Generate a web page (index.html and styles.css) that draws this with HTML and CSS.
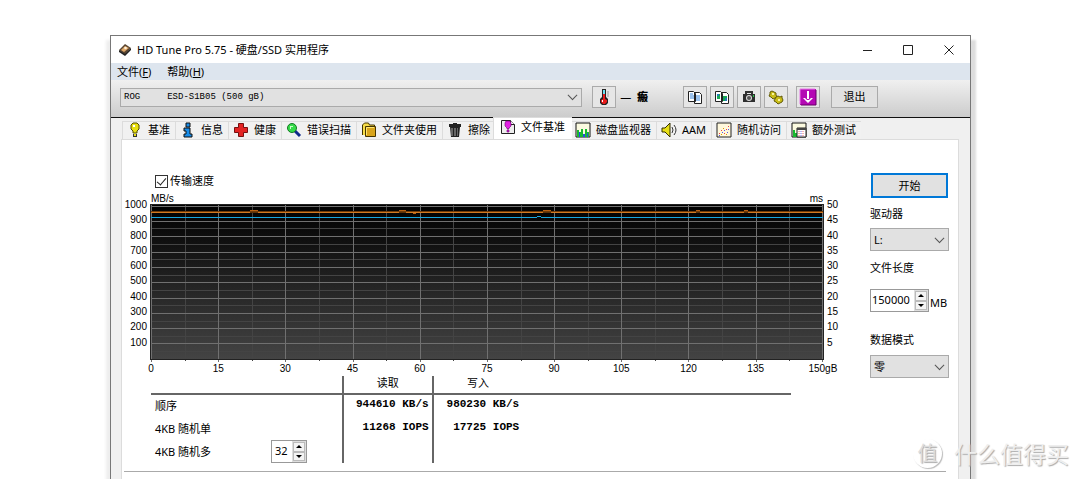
FILE: index.html
```html
<!DOCTYPE html>
<html lang="zh-CN">
<head>
<meta charset="utf-8">
<title>HD Tune Pro 5.75</title>
<link rel="stylesheet" href="styles.css">
</head>
<body>
<div class="window">
  <header class="titlebar">
    <svg class="app-icon" viewBox="0 0 14 14"><path d="M1 7 7 1l6 4-6 7z" fill="#5a4632"/><path d="M1 7v2l6 4v-2zM7 11v2l6-6V5z" fill="#222"/><path d="M3 7 7 3l4 2-5 4z" fill="#e0a868"/><circle cx="7.500" cy="5" r="1.300" fill="#fff3dc"/></svg>
    <h1>HD Tune Pro 5.75 - 硬盘/SSD 实用程序</h1>
    <div class="caption-buttons">
      <button aria-label="最小化"><svg viewBox="0 0 12 12"><path d="M2 6.500h9"/></svg></button>
      <button aria-label="最大化"><svg viewBox="0 0 12 12"><path d="M1.500 1.500h9v9h-9z"/></svg></button>
      <button aria-label="关闭"><svg viewBox="0 0 12 12"><path d="m1.500 1.500 9 9m0-9-9 9"/></svg></button>
    </div>
  </header>
  <nav class="menu"><button>文件(<u>F</u>)</button><button>帮助(<u>H</u>)</button></nav>
  <div class="toolbar">
    <div class="select disk"><select aria-label="硬盘"><option>ROG&nbsp;&nbsp;&nbsp;&nbsp;&nbsp;ESD-S1B05 (500 gB)</option></select></div>
    <button class="tool" aria-label="温度"><svg viewBox="0 0 16 16"><path d="M6 0h4v8l2 2v4l-2 2H6l-2-2v-4l2-2z" fill="#222"/><path d="M7 1h2v4H7z" fill="#6de0ef"/><path d="M7 5h2v5l2 1v2l-2 2H7l-2-2v-2l2-1z" fill="#e81c1c"/><path d="M6 11h1v2H6z" fill="#fff"/><path d="M11 3h2M11 5h2M11 7h2" stroke="#999"/></svg></button>
    <span class="temperature">— <b>瘢</b></span>
    <div class="tool-group">
      <button class="tool" aria-label="复制文本"><svg viewBox="0 0 16 16"><path d="M1.500 2.500h5l2 2v8h-7zM7.500 3.500h5l2 2v9h-7z" fill="#fff" stroke="#222"/><path d="M3 5h3M3 7h4M3 9h4M9 7h4M9 9h4M9 11h4" stroke="#3684d8"/></svg></button>
      <button class="tool" aria-label="复制图像"><svg viewBox="0 0 16 16"><path d="M1.500 2.500h5l2 2v8h-7zM7.500 3.500h5l2 2v9h-7z" fill="#fff" stroke="#222"/><path d="M3 5h3v5H3zM9 7h4v5H9z" fill="#18a858"/><path d="M3 5h2v2H3zM11 9h2v3h-2z" fill="#2878b8"/></svg></button>
      <button class="tool" aria-label="截图"><svg viewBox="0 0 16 16"><path d="M5 5V3h6v2" fill="none" stroke="#333" stroke-width="2"/><path d="M2 5h12v8H2z" fill="#2d2d2d"/><circle cx="8" cy="9" r="3" fill="#ddd"/><circle cx="8" cy="9" r="2" fill="#555"/><path d="M12 6h1v2h-1z" fill="#22cc44"/></svg></button>
      <button class="tool" aria-label="选项"><svg viewBox="0 0 16 16"><g fill="#c9bd18" stroke="#625b08"><path d="m2 3 2-1 2 1 2 1v2l1 2-2 1-2 1-2-2-2-1 1-2z"/><path d="m8 8 2-1 2 1 2-1v2l1 2-1 2-2 1-2 1-2-2-2-1 1-2z"/></g><path d="M4 4h2v2H4zM10 10h2v2h-2z" fill="#f8f3a0"/></svg></button>
    </div>
    <button class="tool save" aria-label="保存"><svg viewBox="0 0 18 18"><path d="M1 1h16v16H1z" fill="#b408b4"/><path d="M1 16V1h15" fill="none" stroke="#e878e8"/><path d="M17 2v15H2" fill="none" stroke="#650065"/><path d="M9 3v8" fill="none" stroke="#fff" stroke-width="2"/><path d="M4 10h2l2 2h2l2-2h2l-5 5z" fill="#fff"/></svg></button>
    <button class="button exit">退出</button>
  </div>
  <main class="body">
    <div class="tabs" role="tablist">
      <button role="tab"><svg viewBox="0 0 16 16"><path d="M6 1h4l2 2v4l-2 2v2H6V9L4 7V3z" fill="#e8df12" stroke="#554e00"/><path d="M6 3h2v2H6z" fill="#fff"/><path d="M6 12h4v3H6z" fill="#333"/><path d="M7 12h2v2H7z" fill="#e8df12"/></svg>基准</button>
      <button role="tab"><svg viewBox="0 0 16 16"><path d="M6 1h4v4H6zM4 6h6v6h2v3H4v-3h2V9H4z" fill="#188ce8" stroke="#111"/></svg>信息</button>
      <button role="tab"><svg viewBox="0 0 16 16"><path d="M5.500 1.500h5v4h4v5h-4v4h-5v-4h-4v-5h4z" fill="#e32424" stroke="#761010"/></svg>健康</button>
      <button role="tab"><svg viewBox="0 0 16 16"><path d="m9 9 5 5" stroke="#102a8c" stroke-width="3"/><circle cx="6" cy="6" r="4.500" fill="#36dc4a" stroke="#147823"/><path d="M4 4h3v1H5v2H4z" fill="#c8ffc8"/></svg>错误扫描</button>
      <button role="tab"><svg viewBox="0 0 16 16"><path d="M1.500 13V3l2-2h4l1 2h5v10" fill="#f6dd48" stroke="#443400"/><path d="M4.500 4.500h10v10h-10z" fill="#d9a51c" stroke="#443400"/><path d="M5.500 13V5.500H13" fill="none" stroke="#ffe670"/></svg>文件夹使用</button>
      <button role="tab"><svg viewBox="0 0 16 16"><path d="M2 2h12v3H2zM6 1h4v2H6zM3 5h10l-1 10H4z" fill="#222"/><path d="M5 6v8M8 6v8" stroke="#aaa"/><path d="M10.500 6v8" stroke="#666"/></svg>擦除</button>
      <button role="tab" class="selected" aria-selected="true"><svg viewBox="0 0 16 16"><path d="M1.500 1.500h9l4 4v9h-13z" fill="#eee" stroke="#222"/><path d="M10.500 1.500v4h4" fill="#fff" stroke="#222"/><path d="M6 2h4l1 2v3L9 9v1H7V9L5 7V4zM7 11h2v2H7z" fill="#e322e3" stroke="#68006c" stroke-width=".600"/></svg>文件基准</button>
      <button role="tab"><svg viewBox="0 0 16 16"><path d="M1 1h14v14H1z" fill="#fbfae0" stroke="#111"/><path d="M2 15V8h2v2h2v-3h2v5h2V7h2v3h2v5z" fill="#18bb30"/><path d="M4 15v-5h1v5zm4 0v-3h2v3zm4 0v-4h1v4z" fill="#264ee0"/></svg>磁盘监视器</button>
      <button role="tab"><svg viewBox="0 0 16 16"><path d="M1 6h3l5-5v14l-5-5H1z" fill="#e8df18" stroke="#332f00"/><path d="M11 5q2 3 0 6M13 3q4 5 0 10" fill="none" stroke="#333"/></svg>AAM</button>
      <button role="tab"><svg viewBox="0 0 16 16"><path d="M1 1h14v14H1z" fill="#fff8dc" stroke="#222"/><path d="M3 11h1v1H3zM5 8h1v1H5zM8 11h1v1H8zM10 7h1v1h-1zM12 4h1v1h-1z" fill="#e44"/><path d="M3 13h1v1H3zM6 10h1v1H6zM8 8h1v1H8zM11 10h1v1h-1zM12 7h1v1h-1z" fill="#55e"/><path d="M5 12h1v1H5zM7 6h1v1H7zM10 12h1v1h-1z" fill="#d90"/></svg>随机访问</button>
      <button role="tab"><svg viewBox="0 0 16 16"><path d="M1 1h14v14H1z" fill="#fbfae0" stroke="#111"/><path d="M2 15V8h2v3h2v4z" fill="#18bb30"/><path d="M6 6h9v9H6z" fill="#fff" stroke="#222"/><path d="M6 6h9v2H6z" fill="#444"/><path d="M8 9v5M12 9v5" stroke="#e66" stroke-dasharray="1 1"/><path d="M10 9v5" stroke="#66e" stroke-dasharray="1 1"/></svg>额外测试</button>
    </div>
    <section class="panel">
      <div class="content">
        <div class="results">
          <label class="check"><input type="checkbox" checked>传输速度</label>
          <div class="chart">
            <div class="axis left"><span>1000</span><span>900</span><span>800</span><span>700</span><span>600</span><span>500</span><span>400</span><span>300</span><span>200</span><span>100</span></div>
            <div class="units"><span>MB/s</span><span>ms</span></div>
            <div class="axis right"><span>50</span><span>45</span><span>40</span><span>35</span><span>30</span><span>25</span><span>20</span><span>15</span><span>10</span><span>5</span></div>
            <svg class="plot" viewBox="0 0 674 158" preserveAspectRatio="none" shape-rendering="crispEdges">
              <defs><linearGradient id="shade" x2="0" y2="1"><stop stop-color="#000"/><stop offset="1" stop-color="#444"/></linearGradient></defs>
              <path d="M0 0h674v156H0z" fill="url(#shade)"/>
              <path d="M35.500 0v157M102.500 0v157M169.500 0v157M236.500 0v157M303.500 0v157M371.500 0v157M438.500 0v157M505.500 0v157M572.500 0v157M639.500 0v157M0 24.500h674M0 40.500h674M0 55.500h674M0 71.500h674M0 86.500h674M0 101.500h674M0 117.500h674M0 132.500h674M0 147.500h674" stroke="#444"/>
              <path d="M1.500 0v158M68.500 0v158M135.500 0v158M203.500 0v158M270.500 0v158M337.500 0v158M404.500 0v158M471.500 0v158M538.500 0v158M606.500 0v158M672.500 0v158M0 2.500h674M0 17.500h674M0 32.500h674M0 48.500h674M0 63.500h674M0 78.500h674M0 94.500h674M0 109.500h674M0 124.500h674M0 139.500h674" stroke="#707070"/>
              <path d="M0 .500h674M0 155.500h674M.500 0v156M673.500 0v156" stroke="#222"/>
              <path d="M1 7.500h672" stroke="#713b08"/>
              <path d="M1 8.500h99M108 8.500h141M256 8.500h137M401 8.500h145M550 8.500h44M598 8.500h75" stroke="#d27a22"/>
              <path d="M100 8.500h8M249 8.500h7M393 8.500h8M546 8.500h4M594 8.500h4" stroke="#5a3008"/>
              <path d="M100 6.500h8M249 6.500h7M263 9.500h3M393 6.500h8M546 6.500h4M594 6.500h4" stroke="#b86112"/>
              <path d="M1 13.500h386M391 13.500h282M387 12.500h4" stroke="#18a8e0"/>
            </svg>
            <div class="axis bottom"><span>0</span><span>15</span><span>30</span><span>45</span><span>60</span><span>75</span><span>90</span><span>105</span><span>120</span><span>135</span><span>150gB</span></div>
          </div>
          <table class="speeds">
            <thead><tr><th class="name"></th><th class="value">读取</th><th class="value">写入</th><th></th></tr></thead>
            <tbody>
              <tr><td>顺序</td><td>944610 KB/s</td><td>980230 KB/s</td><td></td></tr>
              <tr><td>4KB 随机单</td><td>11268 IOPS</td><td>17725 IOPS</td><td></td></tr>
              <tr><td><div class="queue"><label for="queue">4KB 随机多</label><div class="spin"><input id="queue" type="text" value="32"><div class="steps"><button aria-label="增加"><svg viewBox="0 0 6 3"><path d="M0 3 3 0l3 3z"/></svg></button><button aria-label="减少"><svg viewBox="0 0 6 3"><path d="m0 0 3 3 3-3z"/></svg></button></div></div></div></td><td></td><td></td><td></td></tr>
            </tbody>
          </table>
        </div>
        <aside class="settings">
          <button class="button start">开始</button>
          <label for="drive">驱动器</label>
          <div class="select"><select id="drive"><option>L:</option></select></div>
          <label for="length">文件长度</label>
          <div class="length"><div class="spin"><input id="length" type="text" value="150000"><div class="steps"><button aria-label="增加"><svg viewBox="0 0 6 3"><path d="M0 3 3 0l3 3z"/></svg></button><button aria-label="减少"><svg viewBox="0 0 6 3"><path d="m0 0 3 3 3-3z"/></svg></button></div></div><span>MB</span></div>
          <label class="mode-label" for="mode">数据模式</label>
          <div class="select"><select id="mode"><option>零</option></select></div>
        </aside>
      </div>
      <hr>
    </section>
  </main>
</div>
<div class="watermark"><span class="seal">值</span><span>什么值得买</span></div>
</body>
</html>
```

FILE: styles.css
```css
* { box-sizing: border-box; }
body {
  margin: 0;
  height: 100vh;
  padding: 35px 109px 0 110px;
  overflow: hidden;
  position: relative;
  display: flex;
  background: #fff;
  color: #000;
  font: 11px/16px "Noto Sans", "Noto Sans CJK SC", sans-serif;
}
button, input, select { font: inherit; color: inherit; margin: 0; padding: 0; border-radius: 0; }
button { background: none; border: 0; white-space: nowrap; }
svg { display: block; flex: none; }

.window {
  flex: 1;
  min-width: 0;
  display: flex;
  flex-direction: column;
  border: 1px solid #777;
  border-bottom: 0;
  background: #f0f0f0;
  box-shadow: 6px 4px 2px -1px #ddd, -5px 4px 3px -1px #eee;
}
.titlebar { display: flex; align-items: center; height: 27px; padding: 0 15px 0 7px; background: #fff; }
.app-icon { width: 14px; height: 14px; margin-right: 5px; }
h1 { flex: 1; margin: 0; font-size: 11px; font-weight: 400; }
.caption-buttons { display: flex; gap: 29px; }
.caption-buttons svg { width: 12px; height: 12px; fill: none; stroke: #222; }

.menu { display: flex; gap: 16px; height: 17px; padding-left: 6px; background: #dde5ee; }

.toolbar {
  display: flex;
  align-items: center;
  height: 38px;
  padding: 0 92px 3px 9px;
  border-bottom: 1px solid #111;
  background: linear-gradient(#f0f0f0, #ccc);
}
.tool { display: grid; place-items: center; width: 24px; height: 22px; border: 1px solid #aaa; background: #e6e6e6; }
.tool svg { width: 16px; height: 16px; }
.temperature { margin-left: 4px; white-space: nowrap; }
.temperature b { margin-left: 3px; font-weight: 900; }
.tool-group { display: flex; gap: 3px; margin-left: 35px; }
.save { margin: 0 11px 0 8px; }
.save svg { width: 18px; height: 18px; }
.button { border: 1px solid #aaa; background: #e1e1e1; }
.exit { width: 47px; height: 22px; }

.select { position: relative; height: 23px; }
.select::after {
  content: "";
  position: absolute;
  right: 6px;
  top: 50%;
  width: 6px;
  height: 6px;
  border: solid #555;
  border-width: 0 1px 1px 0;
  transform: translateY(-75%) rotate(45deg);
  pointer-events: none;
}
.select select { display: block; width: 100%; height: 100%; padding-left: 3px; appearance: none; border: 1px solid #aaa; background: #e1e1e1; }
.disk { flex: 1; height: 19px; margin-right: 10px; }
.disk select { font: 9px/16px "Liberation Mono", monospace; }

.body { flex: 1; display: flex; flex-direction: column; padding: 2px 11px 0 10px; }
.tabs { display: flex; align-items: flex-end; height: 19px; padding-left: 1px; }
.tabs button { display: flex; align-items: center; gap: 5px; height: 18px; padding: 0 5px 2px 4px; border: solid #dcdcdc; border-width: 1px 0 0 1px; background: #f1f1f1; }
.tabs svg { width: 16px; height: 16px; }
.tabs .selected { position: relative; height: 22px; margin: 0 -2px; padding: 0 7px 4px 6px; background: #fff; }

.panel { flex: 1; border: solid #dcdcdc; border-width: 1px 1px 0; background: #fff; }
.content { display: flex; padding-right: 9px; }
.results { flex: 1; min-width: 0; padding-top: 33px; }
.check { display: flex; align-items: center; gap: 2px; width: max-content; height: 16px; margin-left: 33px; }
.check input { appearance: none; width: 13px; height: 13px; border: 1px solid #333; background: #fff; display: grid; place-items: center; }
.check input:checked::before { content: ""; width: 4px; height: 8px; border: solid #222; border-width: 0 1px 1px 0; transform: translateY(-1px) rotate(40deg); }

.chart {
  display: grid;
  grid-template: 15px 158px 14px / 28px 1fr 46px;
  font: 10px/14px "Liberation Sans", sans-serif;
}
.units { grid-column: 2; grid-row: 1; display: flex; justify-content: space-between; align-items: flex-end; padding: 0 1px; line-height: 10px; }
.plot { grid-column: 2; grid-row: 2; width: 100%; height: 158px; }
.left, .right { grid-row: 1 / 3; display: flex; flex-direction: column; height: 162px; padding-top: 9px; }
.left span, .right span { flex: 1; }
.left { grid-column: 1; text-align: right; padding-right: 3px; }
.right { grid-column: 3; padding-left: 3px; }
.bottom { grid-column: 2; grid-row: 3; display: flex; justify-content: space-between; padding: 0 1px; }
.bottom span { width: 0; display: flex; justify-content: center; }

.speeds { width: calc(100% - 108px); margin-left: 29px; table-layout: fixed; border-collapse: collapse; line-height: 16px; }
.speeds th, .speeds td { height: 23px; padding: 0; }
.speeds th { height: 18px; padding-bottom: 3px; line-height: 14px; font-weight: 400; border-bottom: 2px solid #666; }
.speeds .name { width: 30%; }
.speeds .value { width: 14%; }
.speeds td:first-child { padding-left: 4px; }
.speeds th:nth-child(2), .speeds td:nth-child(2), .speeds th:nth-child(3), .speeds td:nth-child(3) { border-left: 2px solid #666; }
.speeds td:nth-child(n+2) { padding: 0 3px 4px 0; text-align: right; font: bold 11px/16px "Liberation Mono", monospace; }
.queue { display: flex; align-items: center; justify-content: space-between; padding-right: 35px; }

.spin { display: flex; width: 59px; height: 23px; border: 1px solid #999; background: #fff; }
.spin input { flex: 1; min-width: 0; padding: 0 0 2px 1px; border: 0; background: none; }
.steps { display: flex; flex-direction: column; width: 14px; padding: 1px; background: #ddd; }
.steps button { flex: 1; display: grid; place-items: center; border: 1px solid #bbb; background: #f4f4f4; }
.steps svg { width: 6px; height: 3px; }
.queue .spin { width: 36px; }
.queue .spin input { padding-left: 3px; }

.settings { width: 79px; display: flex; flex-direction: column; padding-top: 33px; }
.start { height: 25px; border: 2px solid #0078d7; margin: 0 1px; }
.settings label { margin: 8px 0 6px; line-height: 16px; }
.settings .select + label { margin-top: 9px; margin-bottom: 13px; }
.length { display: flex; align-items: center; gap: 1px; }
.length span { padding-top: 4px; }
.settings .mode-label { margin-top: 20px; margin-bottom: 7px; }

hr { height: 1px; margin: 8px 12px 0 2px; border: 0; background: #aaa; }

.watermark {
  position: absolute;
  right: 11px;
  bottom: 9px;
  display: flex;
  align-items: center;
  gap: 12px;
  color: #eee;
  font: 23px/34px "Noto Sans CJK SC", sans-serif;
  text-shadow: 1px 1px 1px #aaa;
}
.seal { width: 29px; height: 29px; border-radius: 50%; box-shadow: 1px 1px 1px #bbb; color: #ddd; font-size: 20px; line-height: 28px; text-align: center; }
```
